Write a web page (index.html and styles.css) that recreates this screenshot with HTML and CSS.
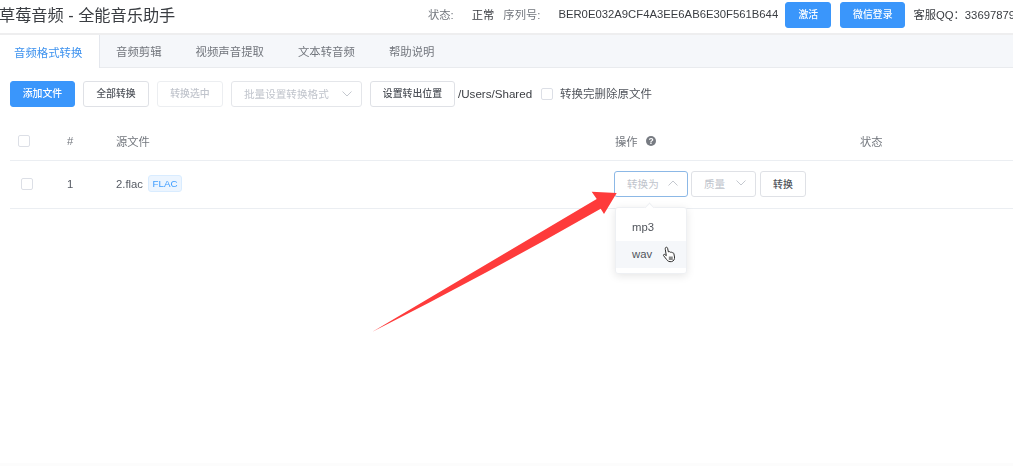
FILE: index.html
```html
<!DOCTYPE html>
<html lang="zh-CN">
<head>
<meta charset="utf-8">
<title>草莓音频</title>
<link rel="stylesheet" href="styles.css">
</head>
<body>
<div class="app">
  <header class="topbar">
    <h1 class="title">草莓音频 - 全能音乐助手</h1>
    <div class="info">
      <span class="muted">状态:</span>
      <span class="status">正常</span>
      <span class="muted serial-label">序列号:</span>
      <span class="serial">BER0E032A9CF4A3EE6AB6E30F561B644</span>
      <button class="btn primary activate">激活</button>
      <button class="btn primary wechat">微信登录</button>
      <span class="qq">客服QQ：33697879</span>
    </div>
  </header>

  <nav class="tabs">
    <a class="tab active">音频格式转换</a>
    <a class="tab t2">音频剪辑</a>
    <a class="tab t3">视频声音提取</a>
    <a class="tab t4">文本转音频</a>
    <a class="tab t5">帮助说明</a>
  </nav>

  <section class="toolbar">
    <button class="btn primary w65">添加文件</button>
    <button class="btn w66">全部转换</button>
    <button class="btn disabled w66">转换选中</button>
    <div class="select batch disabled">
      <span>批量设置转换格式</span>
      <svg class="chev" viewBox="0 0 10 6"><path d="M.5.5l4.500 4.500 4.500-4.500"/></svg>
    </div>
    <button class="btn w85">设置转出位置</button>
    <span class="path">/Users/Shared</span>
    <span class="check opt"></span>
    <span class="opt-label">转换完删除原文件</span>
  </section>

  <section class="table">
    <div class="row head">
      <div class="c-check"><span class="check"></span></div>
      <div class="c-num">#</div>
      <div class="c-file">源文件</div>
      <div class="c-op">操作
        <svg class="help" viewBox="0 0 10 10"><circle cx="5" cy="5" r="5"/><text x="5" y="8" text-anchor="middle">?</text></svg>
      </div>
      <div class="c-state">状态</div>
    </div>
    <div class="row body">
      <div class="c-check inset"><span class="check"></span></div>
      <div class="c-num">1</div>
      <div class="c-file file-cell"><span>2.flac</span><span class="tag">FLAC</span></div>
      <div class="c-op controls">
        <div class="select format focused">
          <span>转换为</span>
          <svg class="chev" viewBox="0 0 10 6"><path d="M.5 5.500l4.500-4.500 4.500 4.500"/></svg>
        </div>
        <div class="select quality">
          <span>质量</span>
          <svg class="chev" viewBox="0 0 10 6"><path d="M.5.5l4.500 4.500 4.500-4.500"/></svg>
        </div>
        <button class="btn convert">转换</button>
        <div class="dropdown">
          <span class="caret"></span>
          <div class="item">mp3</div>
          <div class="item hover">wav
            <svg class="cursor" viewBox="0 0 14 17">
              <path d="M3.600 1.600c.8-.7 1.800-.3 2 .7l.8 3.600c.7-.5 1.600-.3 1.900.4.7-.4 1.500-.2 1.800.5.8-.3 1.600.1 1.800 1l.6 3.200c.3 2-.8 4.300-3 4.600-2 .3-3.800-.3-4.800-2L1.600 9.700c-.5-.8.300-1.700 1.200-1.200l1.500 1.200-1-6.300c-.1-.7 0-1.400.3-1.800z"/>
              <path class="grip" d="M6.800 10.500h4v3.500h-4z"/>
            </svg>
          </div>
        </div>
      </div>
    </div>
  </section>

  <svg class="arrow" viewBox="0 0 1013 466">
    <path d="M372 332L596.700 199L591.700 191.700L616.700 193L604 214L600.700 208.800Q486 274.500 372 332Z"/>
  </svg>
</div>
</body>
</html>
```
FILE: styles.css
```css
* { box-sizing: border-box; }
html, body { margin: 0; height: 100%; background: #fff; overflow: hidden; }
body { font-family: "Liberation Sans", "Noto Sans CJK SC", sans-serif; font-size: 11.3px; color: #555a63; }
.app { position: relative; width: 1013px; height: 466px; overflow: hidden; filter: blur(0.35px); border-bottom: 3px solid #fcfcfc; }

.topbar { display: flex; align-items: center; height: 35px; border-bottom: 2px solid #eeeeef; padding-bottom: 3px; overflow: hidden; }
.title { margin: 0 0 0 -1px; padding-bottom: 2px; font-size: 16.2px; font-weight: 400; color: #3a3d42; white-space: nowrap; flex: none; width: 429px; }
.info { display: flex; align-items: center; flex: none; white-space: nowrap; }
.info > span { padding-bottom: 2px; }
.muted { color: #73777e; }
.status { margin-left: 18px; color: #3a3d42; }
.serial-label { margin-left: 9px; }
.serial { margin-left: 18px; color: #3a3d42; width: 219px; font-size: 11.3px; }
.qq { margin-left: 8px; color: #3a3d42; font-size: 11.3px; }

.btn { height: 26px; padding: 0 0 2px; background: #fff; border: 1px solid #dfe1e6; border-radius: 3px; color: #50545b; font: inherit; font-size: 9.9px; font-weight: 500; flex: none; }
.btn.primary { background: #3a96fb; border-color: #3a96fb; color: #fff; }
.btn.disabled { border-color: #eceef1; color: #c0c4cc; }
.activate { margin-left: 8px; width: 46px; }
.wechat { margin-left: 9px; width: 65px; }
.w65 { width: 65px; }
.w66 { width: 66px; }
.w85 { width: 85px; }

.tabs { display: flex; height: 33px; background: #f5f7fa; border-bottom: 1px solid #e9ebee; }
.tab { display: flex; align-items: center; font-size: 11.4px; color: #73777e; }
.tab.active { width: 100px; height: 33px; padding-left: 14px; background: #fff; color: #3d92ef; border-right: 1px solid #e4e7ed; }
.t2 { margin-left: 16px; }
.t3 { margin-left: 34px; }
.t4 { margin-left: 34px; }
.t5 { margin-left: 34px; }

.toolbar { display: flex; align-items: center; gap: 8px; height: 26px; margin: 13px 0 0 10px; }
.select { display: flex; align-items: center; justify-content: space-between; height: 26px; padding-bottom: 1px; background: #fff; border: 1px solid #dfe1e6; border-radius: 3px; color: #c0c4cc; font-size: 10.6px; flex: none; }
.batch { width: 131px; padding-left: 12px; padding-right: 9px; border-color: #e4e6ea; }
.chev { width: 10px; height: 6px; fill: none; stroke: #c4c8cf; stroke-width: 1; }
.path { margin-left: -5px; color: #3a3d42; font-size: 11.6px; width: 75px; padding-bottom: 2px; }
.check { display: block; width: 12px; height: 12px; border: 1px solid #dcdfe6; border-radius: 2px; background: #fff; }
.opt { flex: none; }
.opt-label { margin-left: -1px; color: #50545b; font-size: 11.5px; padding-bottom: 2px; }

.table { margin: 16px 0 0 10px; }
.row { display: flex; align-items: center; border-bottom: 1px solid #ebeef2; }
.row.head { height: 38px; padding-bottom: 2px; color: #73777e; font-size: 11.3px; }
.row.body { height: 48px; padding-bottom: 2px; }
.c-check { width: 57px; padding-left: 8px; flex: none; }
.c-check.inset { padding-left: 11px; }
.c-num { width: 49px; flex: none; }
.c-file { width: 499px; flex: none; }
.file-cell { display: flex; align-items: center; gap: 5px; }
.c-op { width: 245px; flex: none; display: flex; align-items: center; }
.c-state { flex: none; }
.help { width: 10px; height: 10px; margin-left: 8px; fill: #777b82; }
.help text { fill: #fff; font-size: 8.500px; font-weight: 700; font-family: "Liberation Sans", sans-serif; }
.tag { display: block; width: 34px; height: 17px; line-height: 15px; text-align: center; background: #ecf5ff; border: 1px solid #d9ecff; border-radius: 3px; color: #409eff; font-size: 9.8px; }

.controls { position: relative; gap: 3px; margin-left: -1px; }
.format { width: 74px; padding-left: 12px; padding-right: 9px; border-color: #8cb8e6; }
.quality { width: 65px; padding-left: 12px; padding-right: 9px; }
.btn.convert { width: 46px; margin-left: 1px; padding-bottom: 0; }
.dropdown { position: absolute; left: 1px; top: 36px; width: 72px; padding: 6px 0 5px; background: #fff; border: 1px solid #eef0f3; border-radius: 3px; box-shadow: 0 2px 8px rgba(0, 0, 0, .1); }
.caret { position: absolute; left: 30px; top: -4px; width: 7px; height: 7px; background: #fff; border-left: 1px solid #eef0f3; border-top: 1px solid #eef0f3; transform: rotate(45deg); }
.item { position: relative; height: 27px; line-height: 27px; padding-left: 16px; color: #50545b; font-size: 11.3px; }
.item.hover { background: #f5f7fa; }
.cursor { position: absolute; left: 46px; top: 5px; width: 14px; height: 17px; }
.cursor path { fill: #fff; stroke: #2e2e2e; stroke-width: 1; }
.cursor .grip { fill: #8a8a8a; stroke: none; }

.arrow { position: absolute; left: 0; top: 0; width: 1013px; height: 466px; pointer-events: none; }
.arrow path { fill: #fe3b3b; }
```
